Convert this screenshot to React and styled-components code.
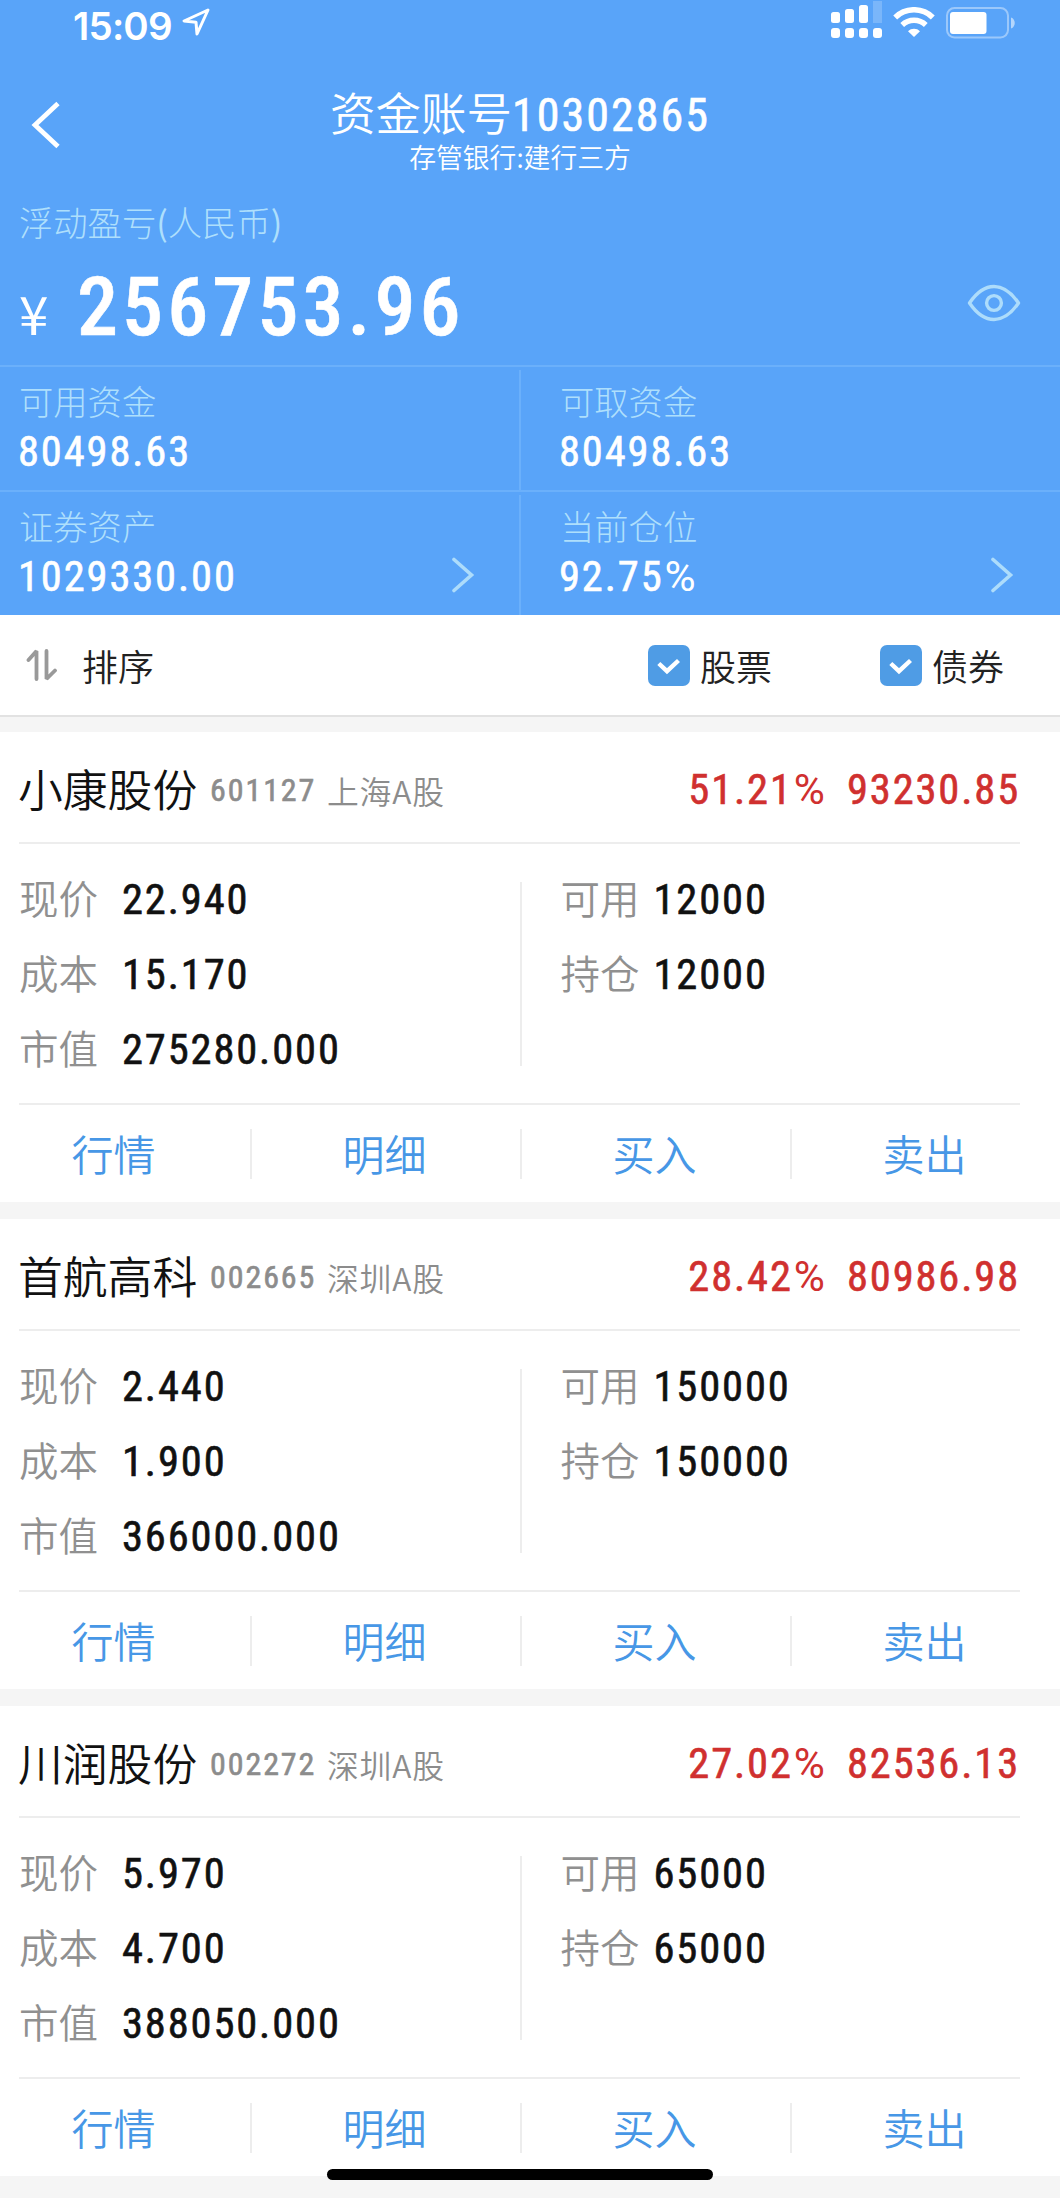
import React from "react";
import styled, { createGlobalStyle } from "styled-components";

const stocks = [
  {
    name: "小康股份",
    code: "601127",
    market: "上海A股",
    rate: "51.21",
    profit: "93230.85",
    price: "22.940",
    cost: "15.170",
    value: "275280.000",
    usable: "12000",
    hold: "12000",
  },
  {
    name: "首航高科",
    code: "002665",
    market: "深圳A股",
    rate: "28.42",
    profit: "80986.98",
    price: "2.440",
    cost: "1.900",
    value: "366000.000",
    usable: "150000",
    hold: "150000",
  },
  {
    name: "川润股份",
    code: "002272",
    market: "深圳A股",
    rate: "27.02",
    profit: "82536.13",
    price: "5.970",
    cost: "4.700",
    value: "388050.000",
    usable: "65000",
    hold: "65000",
  },
];

const funds = [
  { label: "可用资金", value: "80498.63" },
  { label: "可取资金", value: "80498.63" },
  { label: "证券资产", value: "1029330.00", more: true },
  { label: "当前仓位", value: "92.75", percent: true, more: true },
];

const actions = ["行情", "明细", "买入", "卖出"];

function LocationIcon() {
  return (
    <svg width="28" height="28" viewBox="0 0 28 28" fill="none">
      <path
        d="M26 2 2 13l12 1.200L15 26Z"
        stroke="#fff"
        strokeWidth="3"
        strokeLinejoin="round"
      />
    </svg>
  );
}

function SignalIcon() {
  return (
    <svg width="52" height="40" viewBox="0 0 52 40" fill="#fff">
      <rect x="0" y="12" width="9" height="11" rx="2.500" />
      <rect x="14" y="9" width="9" height="14" rx="2.500" />
      <rect x="28" y="5" width="9" height="18" rx="2.500" />
      <rect x="42" y="1" width="9" height="22" fillOpacity="0.2" />
      <rect x="0" y="28" width="9" height="10" rx="3" />
      <rect x="14" y="28" width="9" height="10" rx="3" />
      <rect x="28" y="28" width="9" height="10" rx="3" />
      <rect x="42" y="28" width="9" height="10" rx="3" />
    </svg>
  );
}

function WifiIcon() {
  return (
    <svg width="42" height="30" viewBox="0 0 42 30" fill="none">
      <path d="M2.200 10.400a27 27 0 0 1 37.600 0" stroke="#fff" strokeWidth="5.600" />
      <path d="M9.200 18a17 17 0 0 1 23.600 0" stroke="#fff" strokeWidth="5.400" />
      <path d="M21 30l-6-5.800a8.500 8.500 0 0 1 12 0z" fill="#fff" />
    </svg>
  );
}

function BatteryIcon() {
  return (
    <svg width="70" height="32" viewBox="0 0 70 32" fill="none">
      <rect
        x="1"
        y="1"
        width="61"
        height="29.500"
        rx="7.500"
        stroke="#fff"
        strokeOpacity="0.4"
        strokeWidth="2"
      />
      <rect x="4" y="5" width="36.500" height="22" rx="3" fill="#fff" />
      <path d="M65 10.500c5 1.500 5 9.500 0 11z" fill="#fff" fillOpacity="0.55" />
    </svg>
  );
}

function BackIcon() {
  return (
    <svg width="30" height="48" viewBox="0 0 30 48" fill="none">
      <path d="M27 2.500 4 24l23 21.500" stroke="#fff" strokeWidth="4.800" />
    </svg>
  );
}

function EyeIcon() {
  return (
    <svg width="54" height="38" viewBox="0 0 54 38" fill="none">
      <path
        d="M2.500 19C10 8 18 2.500 27 2.500S44 8 51.500 19C44 30 36 35.500 27 35.500S10 30 2.500 19Z"
        stroke="#addcfb"
        strokeWidth="3.400"
        strokeLinejoin="round"
      />
      <circle cx="27" cy="19" r="7.400" stroke="#addcfb" strokeWidth="3.400" />
    </svg>
  );
}

function ChevronIcon() {
  return (
    <svg width="24" height="36" viewBox="0 0 24 36" fill="none">
      <path
        d="M3 2.500 20.500 18 3 33.500"
        stroke="#addcfb"
        strokeWidth="3.600"
        strokeLinecap="round"
      />
    </svg>
  );
}

function SortIcon() {
  return (
    <svg width="32" height="34" viewBox="0 0 32 34" fill="none">
      <path
        d="M2.500 12 10.500 3V31M20.500 3V31L29 22.500"
        stroke="#999"
        strokeWidth="3.800"
        strokeLinecap="round"
        strokeLinejoin="bevel"
      />
    </svg>
  );
}

function CheckIcon() {
  return (
    <svg width="42" height="41" viewBox="0 0 42 41" fill="none">
      <path d="M10.800 18.500 19 26.200 30.500 15.500" stroke="#fff" strokeWidth="4.400" />
    </svg>
  );
}

export default function App() {
  return (
    <>
      <GlobalStyle />
      <Screen>
        <Header>
          <StatusBar>
            <Clock>15:09</Clock>
            <LocationIcon />
            <StatusIcons>
              <SignalIcon />
              <WifiIcon />
              <BatteryIcon />
            </StatusIcons>
          </StatusBar>
          <NavBar>
            <BackIcon />
            <NavTitle>
              <Account>
                资金账号<Num $size={46}>10302865</Num>
              </Account>
              <Bank>存管银行:建行三方</Bank>
            </NavTitle>
          </NavBar>
          <ProfitLabel>
            浮动盈亏<Paren>(</Paren>人民币<Paren>)</Paren>
          </ProfitLabel>
          <ProfitRow>
            <Yen>¥</Yen>
            <Num $size={82} $weight={500} $spacing={0.05}>256753.96</Num>
            <EyeIcon />
          </ProfitRow>
          <FundGrid>
            {funds.map((fund) => (
              <FundCell key={fund.label}>
                <div>
                  <FundLabel>{fund.label}</FundLabel>
                  <Num>
                    {fund.value}
                    {fund.percent && <Percent>%</Percent>}
                  </Num>
                </div>
                {fund.more && <ChevronIcon />}
              </FundCell>
            ))}
          </FundGrid>
        </Header>
        <FilterBar>
          <SortIcon />
          <SortLabel>排序</SortLabel>
          <Filter>
            <CheckBox>
              <CheckIcon />
            </CheckBox>
            股票
          </Filter>
          <Filter>
            <CheckBox>
              <CheckIcon />
            </CheckBox>
            债券
          </Filter>
        </FilterBar>
        {stocks.map((stock) => (
          <Card key={stock.code}>
            <CardHead>
              <StockName>{stock.name}</StockName>
              <StockCode>
                <Num $size={32} $spacing={0.06}>{stock.code}</Num>
              </StockCode>
              <Market>{stock.market}</Market>
              <Gain>
                <Num>
                  {stock.rate}
                  <Percent>%</Percent>
                </Num>
                <Num>{stock.profit}</Num>
              </Gain>
            </CardHead>
            <CardBody>
              <Column $labelWidth={103}>
                <Label>现价</Label>
                <Num>{stock.price}</Num>
                <Label>成本</Label>
                <Num>{stock.cost}</Num>
                <Label>市值</Label>
                <Num>{stock.value}</Num>
              </Column>
              <Column $labelWidth={93}>
                <Label>可用</Label>
                <Num>{stock.usable}</Num>
                <Label>持仓</Label>
                <Num>{stock.hold}</Num>
              </Column>
            </CardBody>
            <CardActions>
              {actions.map((action) => (
                <Action key={action}>{action}</Action>
              ))}
            </CardActions>
          </Card>
        ))}
        <HomeIndicator />
      </Screen>
    </>
  );
}

const GlobalStyle = createGlobalStyle`
  * {
    box-sizing: border-box;
  }
  body {
    margin: 0;
    background: #f5f5f5;
    overflow: hidden;
    font-family: "Noto Sans CJK SC", sans-serif;
    font-weight: 350;
  }
  svg {
    display: block;
    flex: none;
  }
`;

/* the list runs 20px past the left edge of the window */
const Screen = styled.div`
  position: relative;
  width: 1080px;
  height: 2198px;
  margin-left: -20px;
  overflow: hidden;
`;

const Num = styled.span`
  font-family: Roboto, sans-serif;
  font-weight: ${(props) => props.$weight || 400};
  font-stretch: 85%;
  font-size: ${(props) => props.$size || 42.5}px;
  letter-spacing: ${(props) => props.$spacing || 0.044}em;
  line-height: 1;
  -webkit-text-stroke: 0.6px currentColor;
`;

const Percent = styled.span`
  margin-left: 1px;
  font-stretch: 100%;
  letter-spacing: 0;
  -webkit-text-stroke: 0;
`;

const Header = styled.header`
  height: 615px;
  background: #59a4f9;
  color: #fff;
`;

const StatusBar = styled.div`
  display: flex;
  height: 87px;
  padding: 0 44px 0 93px;
`;

const Clock = styled.span`
  width: 109px;
  padding-top: 3px;
  font: 600 38.500px/46px Inter, sans-serif;
  letter-spacing: -0.8px;

  & + svg {
    margin-top: 8px;
  }
`;

const StatusIcons = styled.div`
  display: flex;
  margin-left: auto;

  svg:nth-child(2) {
    margin: 7px 11px 0 10px;
  }
  svg:nth-child(3) {
    margin-top: 7px;
  }
`;

const NavBar = styled.div`
  display: flex;
  height: 111px;
  padding-left: 51px;

  > svg {
    margin-top: 14px;
  }
`;

const NavTitle = styled.div`
  flex: 1;
  padding-right: 81px;
  text-align: center;
`;

const Account = styled.div`
  height: 54px;
  font-size: 45.500px;
  line-height: 48px;
`;

const Bank = styled.div`
  font-size: 26.800px;
  line-height: 32px;
`;

const ProfitLabel = styled.div`
  height: 52px;
  padding-left: 39px;
  color: #aedffc;
  font-size: 34.300px;
  font-weight: 300;
  line-height: 46px;
`;

const Paren = styled.span`
  font-weight: 400;
`;

const ProfitRow = styled.div`
  display: flex;
  height: 115px;
  padding: 16px 39px 0 39px;

  ${Num} {
    line-height: 82px;
  }
  svg {
    margin: 18px 0 0 auto;
  }
`;

const Yen = styled.span`
  width: 58px;
  padding-top: 16px;
  font: 400 53px/60px "Noto Sans CJK SC", sans-serif;
`;

const FundGrid = styled.div`
  display: grid;
  grid-template-columns: 541px 539px;
  grid-template-rows: 125px 125px;
`;

const FundCell = styled.div`
  display: flex;
  justify-content: space-between;
  padding: 16px 46px 0 39px;
  border-top: 2px solid #6bb0fb;

  &:nth-child(odd) {
    background: linear-gradient(#6bb0fb, #6bb0fb) right 3px / 2px no-repeat;
  }
  ${Num} {
    display: block;
    margin-left: -1px;
    line-height: 46px;
  }
  svg {
    margin-top: 49px;
  }
`;

const FundLabel = styled.div`
  height: 46px;
  color: #aedffc;
  font-size: 34.300px;
  font-weight: 300;
  line-height: 35px;
`;

const FilterBar = styled.div`
  display: flex;
  align-items: center;
  height: 102px;
  padding: 0 56px 0 46px;
  background: #fff;
  border-bottom: 2px solid #e2e2e2;
  color: #222;
  font-size: 36px;
  line-height: 40px;
`;

const SortLabel = styled.div`
  flex: 1;
  padding-left: 24px;
`;

const Filter = styled.div`
  display: flex;
  align-items: center;

  & + & {
    margin-left: 108px;
  }
`;

const CheckBox = styled.div`
  width: 42px;
  height: 41px;
  margin-right: 10px;
  border-radius: 7px;
  background: #4f9ce5;
`;

const Card = styled.section`
  height: 470px;
  margin-top: 17px;
  padding: 0 40px 0 39px;
  background: #fff;

  ${FilterBar} + & {
    margin-top: 15px;
  }
`;

const CardHead = styled.div`
  display: flex;
  align-items: center;
  height: 112px;
  padding-top: 6px;
  border-bottom: 2px solid #ededed;
`;

const StockName = styled.div`
  width: 192px;
  margin: -4px 0 0 -1px;
  color: #111;
  font-size: 44.800px;
  line-height: 60px;
`;

const StockCode = styled.div`
  width: 117px;
  color: #8c8c8c;
`;

const Market = styled.div`
  color: #8c8c8c;
  font-size: 31.800px;
  letter-spacing: 0.8px;
`;

const Gain = styled.div`
  display: flex;
  gap: 22px;
  margin-left: auto;
  color: #d0302f;
`;

const CardBody = styled.div`
  display: grid;
  grid-template-columns: 1fr 1fr;
  height: 261px;
  padding-top: 38px;
  border-bottom: 2px solid #ededed;
`;

const Column = styled.div`
  display: grid;
  grid-template-columns: ${(props) => props.$labelWidth}px 1fr;
  grid-auto-rows: 75px;
  height: 184px;
  color: #111;

  & + & {
    padding-left: 39px;
    border-left: 2px solid #ededed;
  }
  ${Num} {
    line-height: 36px;
  }
`;

const Label = styled.div`
  color: #909090;
  font-size: 39.500px;
  line-height: 30px;
`;

const CardActions = styled.div`
  display: grid;
  grid-template-columns: repeat(4, 270px);
  margin: 24px -40px 0 -39px;
`;

const Action = styled.div`
  height: 50px;
  padding-right: 3px;
  color: #4797e6;
  font-size: 42px;
  line-height: 48px;
  text-align: center;

  & + & {
    border-left: 2px solid #ededed;
  }
`;

/* floats over the end of the last card */
const HomeIndicator = styled.div`
  position: absolute;
  left: 347px;
  bottom: 18px;
  width: 386px;
  height: 11px;
  border-radius: 6px;
  background: #000;
`;
